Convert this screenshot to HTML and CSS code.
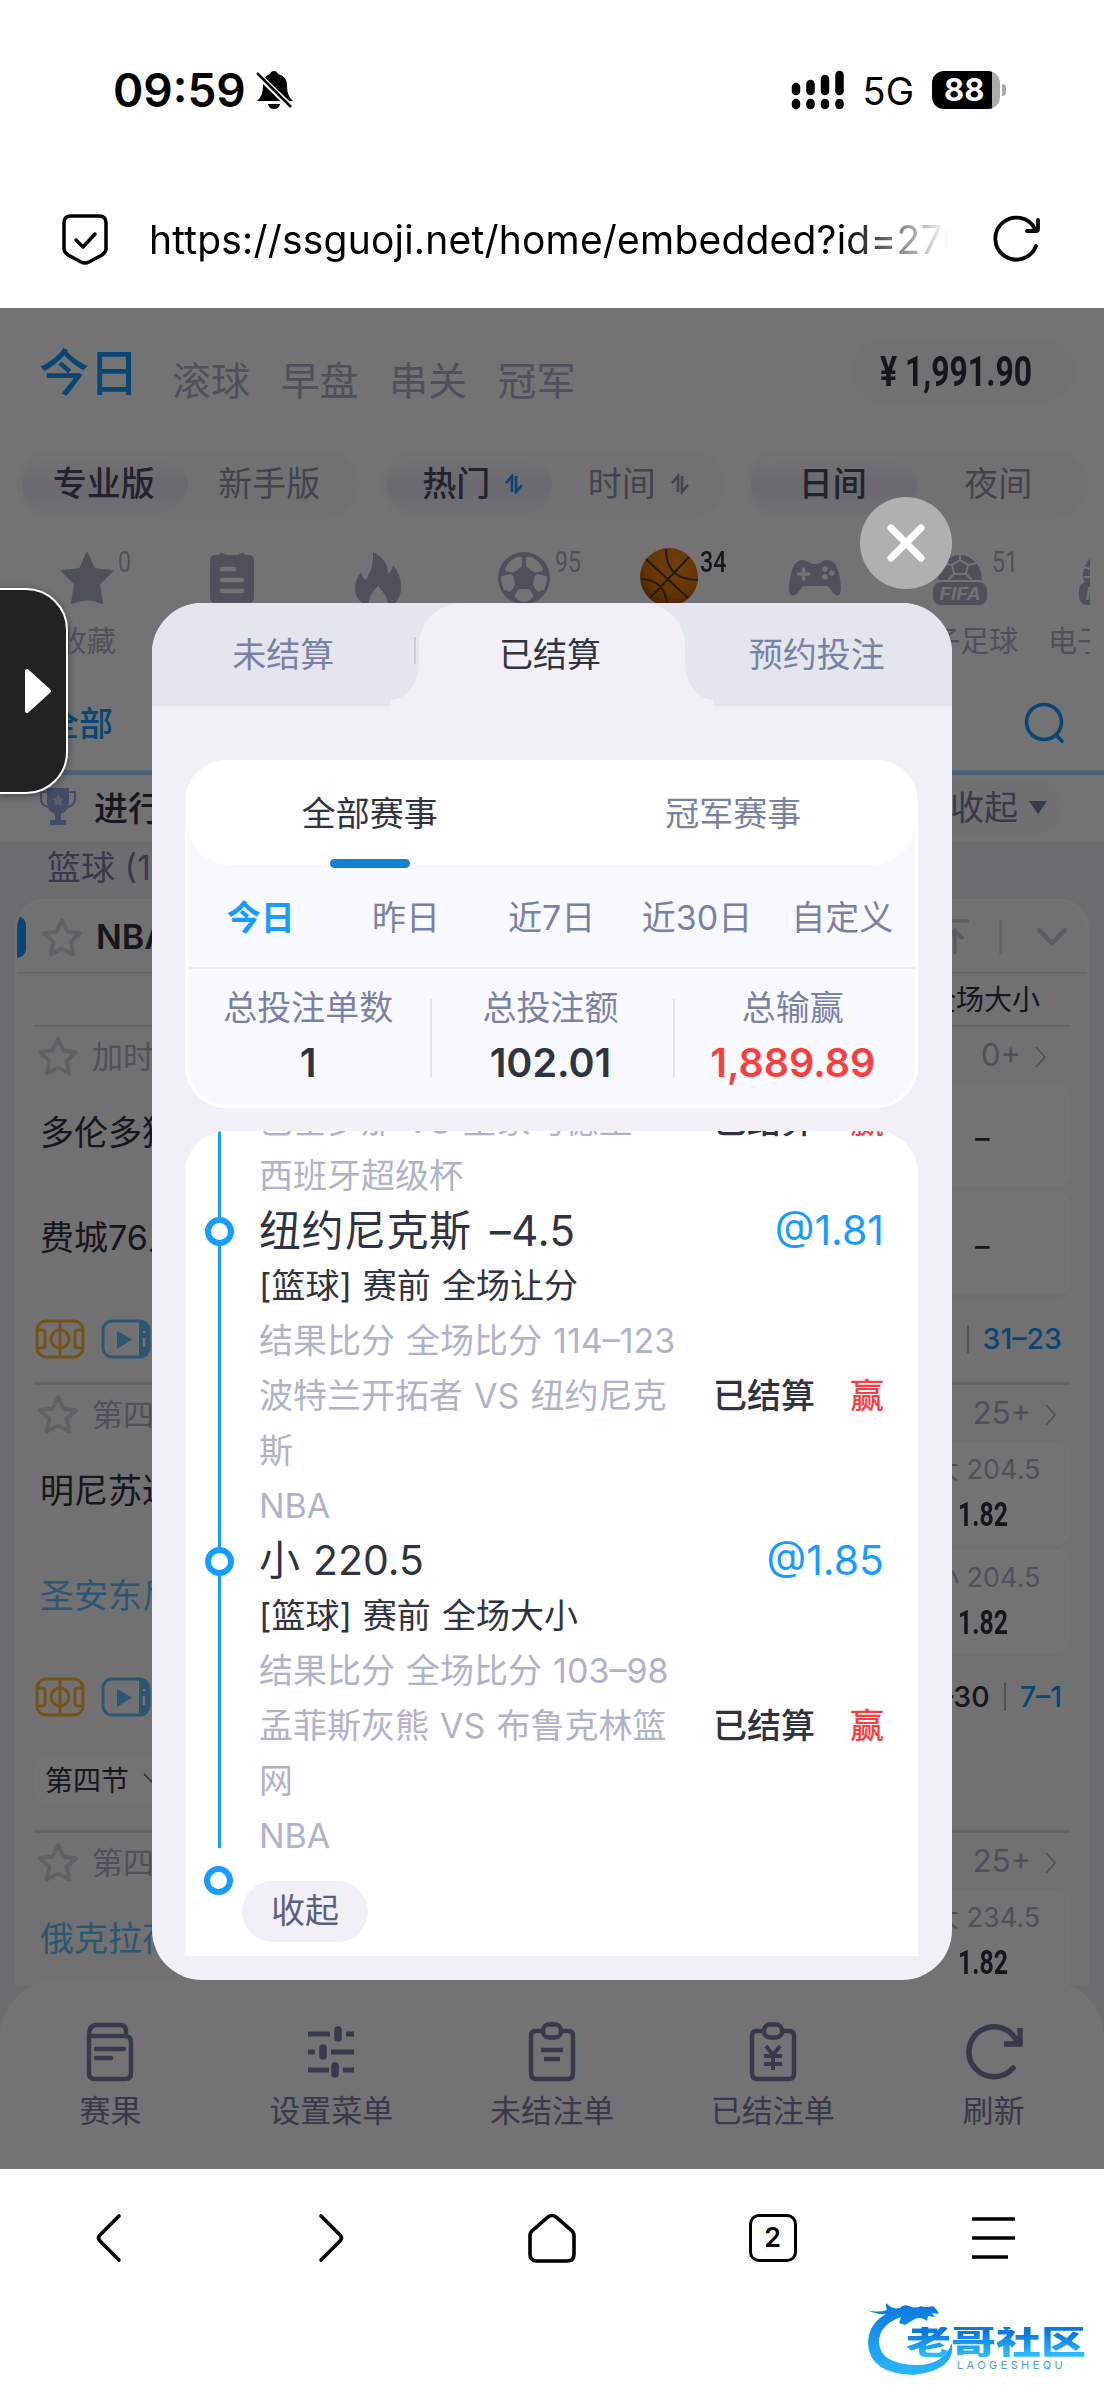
FILE: index.html
```html
<!DOCTYPE html>
<html lang="zh-CN">
<head>
    <meta charset="UTF-8">
    <meta name="viewport" content="width=device-width, initial-scale=1.0">
    <title>已结算注单</title>
    <link rel="stylesheet" href="styles.css">
</head>
<body>
    <!-- shared icons -->
    <svg class="defs" width="0" height="0">
        <symbol id="star" viewBox="0 0 44 42"><path d="M22 4l5.400 11.500 12.600 1.700-9.200 8.700 2.300 12.600L22 32.400l-11.100 6.100 2.300-12.600L4 17.200l12.600-1.700z" fill="none" stroke="currentColor" stroke-width="4" stroke-linejoin="round"/></symbol>
        <symbol id="court" viewBox="0 0 50 40"><g fill="none" stroke="currentColor" stroke-width="3"><rect x="2" y="2" width="46" height="36" rx="9"/><path d="M25 2v36M2 11h5q3 0 3 3v12q0 3-3 3H2M48 11h-5q-3 0-3 3v12q0 3 3 3h5"/><circle cx="25" cy="20" r="9"/></g></symbol>
        <symbol id="video" viewBox="0 0 50 40"><rect x="2" y="2" width="46" height="36" rx="9" fill="none" stroke="currentColor" stroke-width="3"/><path d="M38 2h4q6 0 6 7v22q0 7-6 7h-4zM16 12l15 8.500L16 30z" fill="currentColor"/><path d="M43 12v2M43 19v9" stroke="#fff" stroke-width="2.500"/></symbol>
        <symbol id="next" viewBox="0 0 14 24"><path d="M2 2l9 10-9 10" fill="none" stroke="currentColor" stroke-width="1.500"/></symbol>
        <symbol id="clip" viewBox="0 0 48 60"><g fill="none" stroke="currentColor" stroke-width="4.500"><path d="M15 9H8q-5 0-5 5v37q0 6 5 6h32q5 0 5-6V14q0-5-5-5h-7"/><rect x="15" y="2.500" width="18" height="13" rx="6"/></g></symbol>
        <symbol id="sort" viewBox="0 0 20 20"><path class="sort-up" d="M8 18V2L2 9" fill="none" stroke-width="2.600"/><path class="sort-down" d="M12 2v16l6-7" fill="none" stroke-width="2.600"/></symbol>
    </svg>

    <!-- status bar -->
    <header class="status">
        <div class="clock">09:59
            <svg width="37" height="40" viewBox="0 0 37 40"><path d="M18 1q3 0 4 3 9 2 9 12 0 10 6 15H1q6-5 6-15Q7 6 14 4q1-3 4-3z"/><path d="M12 34h12q-1 5-6 5t-6-5z"/><path d="M1 4l34 33" stroke="#fff" stroke-width="6"/><path d="M1 3l34 34" stroke="#000" stroke-width="2.500"/></svg>
        </div>
        <div class="signal">
            <svg width="54" height="40" viewBox="0 0 54 40" stroke="#000" stroke-width="8.500" stroke-linecap="round"><path d="M5 17v4M19.500 14v7M34 9v12M48.500 5v16M5 33v2M19.500 33v2M34 33v2M48.500 33v2"/></svg>
            <span class="net">5G</span>
            <span class="battery">88</span><i class="battery-tip"></i>
        </div>
    </header>
    <div class="address">
        <svg width="48" height="52" viewBox="0 0 48 52" fill="none" stroke="#000" stroke-width="3.500" stroke-linejoin="round" stroke-linecap="round"><path d="M10 3h28q7 0 7 7v26q0 3-4 6L28 49q-4 2-8 0L7 42q-4-3-4-6V10q0-7 7-7z"/><path d="M15 27l7 7 12-13"/></svg>
        <div class="url">https://ssguoji.net/home/embedded?id=270</div>
        <svg width="48" height="50" viewBox="0 0 48 50" fill="none" stroke="#000" stroke-width="3.800" stroke-linecap="round"><path d="M43 32A21 21 0 1 1 42 15"/><path d="M45 6v9q0 2-2 2h-9"/></svg>
    </div>

    <main class="app">
        <div class="top">
            <nav class="kinds">
                <b>今日</b><span>滚球</span><span>早盘</span><span>串关</span><span>冠军</span>
                <div class="balance"><span>¥ 1,991.90</span></div>
            </nav>
            <div class="switches">
                <div class="switch"><b>专业版</b><span>新手版</span></div>
                <div class="switch"><b>热门<svg class="sort on" width="20" height="20"><use href="#sort"/></svg></b><span>时间<svg class="sort" width="20" height="20"><use href="#sort"/></svg></span></div>
                <div class="switch"><b>日间</b><span>夜间</span></div>
            </div>
            <div class="sports">
                <div class="sport"><svg width="54" height="54" viewBox="0 0 54 54"><path d="M27 2l7 16 18 2-13 13 3 19q-15-7-30 0l3-19L2 20l18-2z" fill="currentColor" stroke="currentColor" stroke-width="2" stroke-linejoin="round"/></svg><sup>0</sup><span>收藏</span></div>
                <div class="sport"><svg width="54" height="54" viewBox="0 0 54 54"><path d="M10 4h4q0-2 3-2t3 2h14q0-2 3-2t3 2h4q5 0 5 6v36q0 6-6 6H11q-6 0-6-6V10q0-6 5-6z" fill="currentColor"/><path d="M17 18h12M17 29h20M17 40h20" stroke="#fff" stroke-width="4.500" stroke-linecap="round"/></svg></div>
                <div class="sport"><svg width="54" height="56" viewBox="0 0 54 56"><path d="M22 1q15 7 15 22 4-3 5-9 9 11 8 24-1 14-13 18 1-10-10-21-11 10-9 21Q5 51 4 38q0-9 6-17 1 6 5 8Q23 16 22 1z" fill="currentColor"/></svg></div>
                <div class="sport"><svg width="54" height="54" viewBox="0 0 54 54"><circle cx="27" cy="27" r="26" fill="currentColor"/><path d="M8 18q3-8 12-12 5-1 5 1v7q0 2-2 3l-6 4q-2 1-4 0l-4-1q-1 0-1-2zM46 18q-3-8-12-12-5-1-5 1v7q0 2 2 3l6 4q2 1 4 0l4-1q1 0 1-2zM4 27q0-2 2-2l7-2q2 0 3 2l2 8q0 2-1 3l-3 4q-1 1-3 0l-4-1q-3-6-3-12zM50 27q0-2-2-2l-7-2q-2 0-3 2l-2 8q0 2 1 3l3 4q1 1 3 0l4-1q3-6 3-12zM18 46q-1-1 0-2l2-4q1-2 3-2h8q2 0 3 2l2 4q1 1 0 2-4 5-9 5t-9-5z" fill="#fff"/></svg><sup>95</sup></div>
                <div class="sport hot"><svg width="60" height="60" viewBox="0 0 60 60"><defs><radialGradient id="ball" cx=".6" cy=".3" r=".8"><stop offset="0" stop-color="#f58a1c"/><stop offset=".6" stop-color="#e07806"/><stop offset="1" stop-color="#8c4008"/></radialGradient></defs><circle cx="30" cy="30" r="29" fill="url(#ball)"/><path d="M7 12l42 39M50 10L11 51M27 2Q27 33 59 33M2 32Q26 33 28 57" fill="none" stroke="#4d3c30" stroke-width="2"/></svg><sup>34</sup></div>
                <div class="sport"><svg width="54" height="54" viewBox="0 0 54 54"><path d="M10 10q6-3 12 2 5 2 10 0 6-5 12-2 8 6 9 28-1 10-7 5l-6-8H15l-6 8q-8 5-8-5Q2 16 10 10z" fill="currentColor"/><path d="M15.500 18v10M10.500 23h10" stroke="#fff" stroke-width="3.500" stroke-linecap="round"/><circle cx="37" cy="18" r="2.800" fill="#fff"/><circle cx="44" cy="22" r="2.800" fill="#fff"/><circle cx="37" cy="26" r="2.800" fill="#fff"/></svg></div>
                <div class="sport"><svg width="56" height="56" viewBox="0 0 56 56"><path d="M6 29a22 25 0 0 1 44 0z" fill="currentColor"/><path d="M20 14l8-5 8 5-2 9H22zM28 9V3M20 14l-9-2M36 14l9-2M22 23l-6 6M34 23l6 6" fill="none" stroke="#fff" stroke-width="2"/><rect x="1" y="31" width="54" height="23" rx="8" fill="currentColor"/><text x="28" y="49" text-anchor="middle" class="ball-tag">FIFA</text></svg><sup>51</sup><span>电子足球</span></div>
                <div class="sport"><svg width="56" height="56" viewBox="0 0 56 56"><circle cx="28" cy="24" r="23" fill="currentColor"/><path d="M6 16q12 5 44 0M6 26h44" stroke="#fff" stroke-width="2" fill="none"/><rect x="1" y="31" width="54" height="23" rx="8" fill="currentColor"/><text x="28" y="49" text-anchor="middle" class="ball-tag">NBA</text></svg><span>电子篮球</span></div>
            </div>
            <div class="leagues">
                <span>全部</span>
                <svg width="42" height="42" viewBox="0 0 42 42" fill="none" stroke="#179cff" stroke-width="3.600" stroke-linecap="round"><circle cx="20" cy="20" r="17.500"/><path d="M33 34l5 5"/></svg>
            </div>
        </div>
        <div class="live">
            <svg width="38" height="40" viewBox="0 0 38 40"><path d="M8 1h22v14q0 9-8 12v6h5v5H11v-5h5v-6q-8-3-8-12z" fill="#97a8dc"/><path d="M8 5H2v7q0 6 7 8M30 5h6v7q0 6-7 8" fill="none" stroke="#97a8dc" stroke-width="2"/><path d="M19 7l2 4 4 .5-3 3 .8 4.500-3.800-2-3.800 2 .8-4.500-3-3 4-.5z" fill="#c5d0ee"/></svg>
            <b>进行中 (10)</b>
            <div class="fold">收起<i></i></div>
        </div>
        <div class="sport-name">篮球 (10)</div>

        <section class="card">
            <div class="league">
                <i class="mark"></i>
                <svg class="star" width="44" height="42"><use href="#star"/></svg>
                <b>NBA</b>
                <svg class="to-top" width="34" height="36" viewBox="0 0 34 36"><path d="M1 2h32M19 35V12M11 20l8-9 8 9" fill="none" stroke="currentColor" stroke-width="3.500"/></svg>
                <i class="bar"></i>
                <svg class="down" width="30" height="20" viewBox="0 0 30 20"><path d="M2 3l13 13L28 3" fill="none" stroke="currentColor" stroke-width="4.500" stroke-linecap="round"/></svg>
            </div>
            <div class="columns">全场大小</div>
            <div class="match">
                <div class="match-head"><svg class="star" width="44" height="42"><use href="#star"/></svg><span>加时</span><em class="near">0+<svg width="14" height="24"><use href="#next"/></svg></em></div>
                <div class="match-body">
                    <div class="teams"><p>多伦多猛龙</p><p>费城76人</p></div>
                    <div class="odds"><div class="odd empty">–</div><div class="odd empty">–</div></div>
                </div>
                <div class="match-foot"><svg class="court" width="50" height="40"><use href="#court"/></svg><svg class="video" width="50" height="40"><use href="#video"/></svg><span class="score">26–26</span><i></i><span class="score total">31–23</span></div>
            </div>
            <div class="match">
                <div class="match-head"><svg class="star" width="44" height="42"><use href="#star"/></svg><span>第四节</span><em>25+<svg width="14" height="24"><use href="#next"/></svg></em></div>
                <div class="match-body">
                    <div class="teams"><p>明尼苏达森林狼</p><p class="lead">圣安东尼奥马刺</p></div>
                    <div class="odds"><div class="odd"><small>大 204.5</small><b>1.82</b></div><div class="odd"><small>小 204.5</small><b>1.82</b></div></div>
                </div>
                <div class="match-foot"><svg class="court" width="50" height="40"><use href="#court"/></svg><svg class="video" width="50" height="40"><use href="#video"/></svg><span class="score">22–30</span><i></i><span class="score total">7–1</span></div>
                <div class="period">第四节<svg width="22" height="14" viewBox="0 0 22 14"><path d="M1 2l10 10L21 2" fill="none" stroke="#5a6080" stroke-width="1.500"/></svg></div>
            </div>
            <div class="match">
                <div class="match-head"><svg class="star" width="44" height="42"><use href="#star"/></svg><span>第四节</span><em>25+<svg width="14" height="24"><use href="#next"/></svg></em></div>
                <div class="match-body">
                    <div class="teams"><p class="lead">俄克拉荷马雷霆</p></div>
                    <div class="odds"><div class="odd"><small>大 234.5</small><b>1.82</b></div></div>
                </div>
            </div>
        </section>

        <nav class="menu">
            <div><svg width="48" height="60" viewBox="0 0 48 60" fill="none" stroke="currentColor" stroke-width="4.500"><path d="M3 13v38q0 6 6 6h30q6 0 6-6V20q0-5-5-6H3q0-11 7-11h24q6 0 6 6v6"/><path d="M10 27h28M10 36h15" stroke-linecap="round"/></svg>赛果</div>
            <div><svg width="48" height="60" viewBox="0 0 48 60" fill="none" stroke="currentColor" stroke-width="5"><path d="M1 12h22M39 12h8M1 30h7M24 30h23M1 48h21M36 48h11"/><path d="M31 8v8M16 26v8M28 44v8" stroke-width="7.500" stroke-linecap="round"/></svg>设置菜单</div>
            <div><svg width="48" height="60" viewBox="0 0 48 60"><use href="#clip"/><path d="M13 28h22M16 37h16" stroke="currentColor" stroke-width="4.500"/></svg>未结注单</div>
            <div><svg width="48" height="60" viewBox="0 0 48 60"><use href="#clip"/><path d="M17 24l7 9 7-9M24 33v15M15 34h18M15 42h18" stroke="currentColor" stroke-width="3.800" fill="none"/></svg>已结注单</div>
            <div><svg width="58" height="60" viewBox="0 0 58 60" fill="none" stroke="currentColor" stroke-width="5.500"><path d="M48 46A25 25 0 1 1 52 20" stroke-linecap="round"/><path d="M55 6v16H39"/></svg>刷新</div>
        </nav>

        <div class="mask"></div>

        <div class="close"><svg width="38" height="38" viewBox="0 0 38 38"><path d="M4 4l30 30M34 4L4 34" stroke="#fff" stroke-width="7" stroke-linecap="round"/></svg></div>

        <div class="modal">
            <div class="tabs">
                <div class="tab">未结算</div>
                <div class="tab active">已结算</div>
                <div class="tab">预约投注</div>
            </div>
            <div class="summary">
                <div class="types"><span class="active">全部赛事</span><span>冠军赛事</span></div>
                <div class="days"><b>今日</b><span>昨日</span><span>近7日</span><span>近30日</span><span>自定义</span></div>
                <div class="stats">
                    <div><span>总投注单数</span><b>1</b></div>
                    <div><span>总投注额</span><b>102.01</b></div>
                    <div><span>总输赢</span><b class="win">1,889.89</b></div>
                </div>
            </div>
            <div class="bets">
                <div class="bet first">
                    <div class="row grey"><p>巴塞罗那 VS 皇家马德里</p><span class="state">已结算 <b>赢</b></span></div>
                    <p class="grey">西班牙超级杯</p>
                </div>
                <div class="bet">
                    <i class="dot"></i>
                    <div class="row title handicap"><span>纽约尼克斯 –4.5</span><span class="price">@1.81</span></div>
                    <p>[篮球] 赛前 全场让分</p>
                    <p class="grey">结果比分 全场比分 114–123</p>
                    <div class="row grey"><p>波特兰开拓者 VS 纽约尼克斯</p><span class="state">已结算 <b>赢</b></span></div>
                    <p class="grey">NBA</p>
                </div>
                <div class="bet last">
                    <i class="dot"></i>
                    <div class="row title"><span>小 220.5</span><span class="price">@1.85</span></div>
                    <p>[篮球] 赛前 全场大小</p>
                    <p class="grey">结果比分 全场比分 103–98</p>
                    <div class="row grey"><p>孟菲斯灰熊 VS 布鲁克林篮网</p><span class="state">已结算 <b>赢</b></span></div>
                    <p class="grey">NBA</p>
                </div>
                <div class="end"><i class="dot"></i><span>收起</span></div>
            </div>
        </div>

        <div class="handle"><svg width="28" height="48" viewBox="0 0 28 48"><path d="M3 4v40l22-20z" fill="#fff" stroke="#fff" stroke-width="4" stroke-linejoin="round"/></svg></div>
    </main>

    <!-- browser toolbar -->
    <footer class="toolbar">
        <div><svg width="48" height="52" viewBox="0 0 48 52"><path d="M33 4L14 23q-3 3 0 6l19 19"/></svg></div>
        <div><svg width="48" height="52" viewBox="0 0 48 52"><path d="M14 4l19 19q3 3 0 6L14 48"/></svg></div>
        <div><svg width="50" height="52" viewBox="0 0 50 52"><path d="M3 24q0-4 3-6L21 5q4-3 8 0l15 13q3 2 3 6v18q0 7-7 7H10q-7 0-7-7z"/></svg></div>
        <div><span class="pages">2</span></div>
        <div><svg width="48" height="52" viewBox="0 0 48 52" stroke-linecap="butt"><path d="M2 7h43M2 26h43M2 45h36"/></svg></div>
        <div class="brand">
            <svg width="96" height="80" viewBox="0 0 96 80">
                <defs><linearGradient id="blue" x1="0" y1="0" x2="0" y2="1"><stop offset="0" stop-color="#0878dc"/><stop offset="1" stop-color="#2ab8ff"/></linearGradient></defs>
                <path d="M1 13q10 3 20 0-2-4-1-7 6 7 14 5 3-4 9-2 6 3 12 0 4 2 12 0 4 3 6 8l-7-1 3 4-7-1-1 5q-6-5-12-2l-10 6-6-2 2-6Q13 28 13 45q1 22 37 23 28 0 36-22 4 27-38 32Q4 77 2 47q0-20 18-30-9 1-19-4z" fill="url(#blue)"/>
            </svg>
            <div class="brand-name"><b>老哥社区</b><small>LAOGESHEQU</small></div>
        </div>
    </footer>
</body>
</html>
```
FILE: styles.css
```css
* {
    box-sizing: border-box;
}
body {
    margin: 0;
    width: 1104px;
    height: 2400px;
    overflow: hidden;
    background: #fff;
    color: #303442;
    font-family: Inter, "Noto Sans CJK SC", sans-serif;
    font-size: 34px;
}
p {
    margin: 0;
}
svg {
    display: block;
    flex: none;
}
b {
    font-weight: 500;
}
em, i {
    font-style: normal;
}
.defs {
    position: absolute;
}

/* status bar */
.status {
    height: 172px;
    padding: 8px 98px 0 113px;
    display: flex;
    align-items: center;
    justify-content: space-between;
    color: #000;
}
.clock {
    display: flex;
    align-items: center;
    gap: 10px;
    font-size: 46px;
    font-weight: 600;
}
.signal {
    display: flex;
    align-items: center;
}
.net {
    margin: 2px 18px 0;
    font-size: 38px;
}
.battery {
    width: 68px;
    height: 38px;
    border-radius: 12px;
    background: linear-gradient(90deg, #000 60px, #aaa 60px);
    color: #fff;
    font-size: 31px;
    font-weight: 700;
    line-height: 38px;
    padding-left: 12px;
}
.battery-tip {
    width: 4px;
    height: 12px;
    margin-left: 2px;
    border-radius: 0 4px 4px 0;
    background: #aaa;
}
.address {
    height: 136px;
    padding: 2px 62px 4px 61px;
    display: flex;
    align-items: center;
    color: #000;
}
.url {
    width: 808px;
    margin: 0 36px 0 40px;
    overflow: hidden;
    white-space: nowrap;
    font-size: 39px;
    letter-spacing: .2px;
    -webkit-mask-image: linear-gradient(90deg, #000 86%, transparent 99%);
    mask-image: linear-gradient(90deg, #000 86%, transparent 99%);
}

/* sports page */
.app {
    position: relative;
    height: 1861px;
    overflow: hidden;
    background: #f2f2f7;
    display: flex;
    flex-direction: column;
}
.top {
    flex: none;
    height: 467px;
    background: #fff;
    border-bottom: 5px solid #a7d7fd;
}
.kinds {
    height: 142px;
    padding: 0 29px 19px 39px;
    display: flex;
    align-items: center;
    color: #afb3c8;
    font-size: 39px;
}
.kinds b {
    color: #179cff;
    font-size: 50px;
    margin: -2px 33px 0 0;
}
.kinds > span {
    margin: 17px 30.500px 0 0;
}
.balance {
    margin: 3px 0 0 auto;
    width: 223px;
    height: 64px;
    border-radius: 32px;
    background: #fbfbfb;
    color: #303442;
    display: flex;
    align-items: center;
    justify-content: center;
}
.balance span {
    margin: 0 15px 0 0;
    font-family: Roboto, sans-serif;
    font-size: 42px;
    font-weight: 700;
    white-space: nowrap;
    flex: none;
    transform: scaleX(.76);
}
.switches {
    height: 69px;
    padding: 0 16px;
    display: flex;
    justify-content: space-between;
}
.switch {
    width: 343px;
    padding: 6px;
    border-radius: 35px;
    background: #fafafa;
    display: flex;
    color: #9397ac;
}
.switch b, .switch span {
    flex: 1;
    padding: 0 2px 6px 0;
    display: flex;
    align-items: center;
    justify-content: center;
    gap: 14px;
    border-radius: 30px;
}
.switch b {
    color: #494e68;
    background: linear-gradient(#fff, #eaebf5 50%, #f7f9ff);
}
.sort {
    margin: 5px -10px 0 0;
    color: #9397ac;
}
.sort-up, .sort-down {
    stroke: currentColor;
}
.sort.on {
    color: #179cff;
}
.sort.on .sort-down {
    stroke: #303442;
}
.sports {
    width: 1076px;
    height: 147px;
    margin: 0 14px;
    padding: 32px 0 3px;
    overflow: hidden;
    display: flex;
    color: #afb3c8;
}
.sport {
    position: relative;
    flex: 0 0 145.6px;
    display: flex;
    flex-direction: column;
    align-items: center;
    justify-content: space-between;
    font-size: 29px;
    line-height: 42px;
    white-space: nowrap;
}
.sport sup {
    position: absolute;
    left: 104px;
    top: -6px;
    font-family: Roboto, sans-serif;
    font-size: 29px;
    line-height: 34px;
    transform: scaleX(.8);
    transform-origin: left;
}
.hot sup {
    top: -2px;
    color: #303442;
    font-weight: 500;
}
.hot {
    margin-top: -4px;
}
.ball-tag {
    font: italic 700 19px "Liberation Sans", sans-serif;
    fill: #fff;
}
.leagues {
    height: 104px;
    padding: 6px 38px 0 45px;
    display: flex;
    align-items: center;
    justify-content: space-between;
    color: #179cff;
    font-weight: 500;
}
.leagues svg {
    margin-top: 4px;
}
.live {
    flex: none;
    height: 66px;
    padding: 0 41px 3px 39px;
    background: #fdfdfd;
    display: flex;
    align-items: center;
}
.live b {
    margin-left: 17px;
}
.fold {
    margin-left: auto;
    height: 56px;
    padding: 0 16px 2px 30px;
    border-radius: 28px;
    background: #f8f8f8;
    display: flex;
    align-items: center;
    gap: 11px;
    color: #7981a4;
}
.fold i {
    margin-top: 4px;
    border: 9px solid transparent;
    border-top: 13px solid #7981a4;
    border-bottom: 0;
}
.sport-name {
    flex: none;
    height: 58px;
    padding-left: 47px;
    line-height: 53px;
    color: #7981a4;
}
.card {
    flex: 1;
    min-height: 0;
    overflow: hidden;
    margin: 0 15px -4px;
    border: 2px solid #fff;
    border-bottom: 0;
    border-radius: 30px 30px 0 0;
    background: #fafafa;
}
.league {
    height: 73px;
    padding-right: 20px;
    border-bottom: 2px solid #e4e4ef;
    display: flex;
    align-items: center;
    color: #ccced9;
}
.league b {
    margin-left: 12px;
    color: #303442;
    font-weight: 600;
}
.star {
    color: #d5d7e0;
}
.mark {
    width: 9px;
    height: 42px;
    margin-right: 14px;
    border-radius: 0 9px 9px 0;
    background: #179cff;
}
.to-top {
    margin-left: auto;
}
.bar {
    width: 3px;
    height: 34px;
    margin: 0 35px 0 29px;
    background: #dfe0ea;
}
.columns {
    height: 53px;
    margin: 0 17px;
    padding-right: 30px;
    border-bottom: 2px solid #e0e0ea;
    text-align: right;
    font-size: 28px;
    line-height: 53px;
}
.match {
    margin: 0 17px;
}
.match + .match {
    border-top: 3px solid #e0e0ea;
}
.match-head {
    height: 57px;
    padding-left: 2px;
    display: flex;
    align-items: center;
    font-size: 31px;
    color: #afb3c8;
}
.match-head span {
    margin: -2px 0 0 12px;
}
.match-head em {
    margin: -2px 22px 0 auto;
    display: flex;
    align-items: center;
    gap: 13px;
}
.match-head em svg {
    margin: 4px -10px 0 0;
}
.match-head .near {
    margin-right: 32px;
}
.match-body {
    display: flex;
    justify-content: space-between;
}
.teams {
    padding-left: 6px;
    line-height: 105px;
    margin: -4px 0 -2px;
}
.lead {
    color: #65bfff;
}
.odds {
    width: 190px;
    display: flex;
    flex-direction: column;
    gap: 5px;
}
.odd {
    height: 103px;
    padding: 8px 0 0 70px;
    border-radius: 14px;
    background: #fff;
    display: flex;
    flex-direction: column;
    line-height: 44px;
    box-shadow: 0 2px 5px #f0f3f3;
}
.odd small {
    font-size: 27px;
    line-height: 40px;
    color: #afb3c8;
    white-space: nowrap;
    margin-left: -18px;
}
.odd b {
    font-family: Roboto, sans-serif;
    font-weight: 700;
    font-size: 34px;
    transform: scaleX(.73);
    transform-origin: left;
    margin: 2px 0 0 8px;
}
.odd.empty {
    padding: 32px 0 0 95px;
    font-size: 29px;
    font-weight: 500;
}
.match-foot {
    height: 87px;
    padding: 0 8px 0 1px;
    display: flex;
    align-items: center;
    font-size: 28.500px;
    font-weight: 500;
}
.court {
    color: #ffb73c;
}
.video {
    margin: 0 auto 0 16px;
    color: #65bfff;
}
.match-foot i {
    width: 2px;
    height: 28px;
    margin: 0 14px;
    background: #afb3c8;
}
.total {
    color: #179cff;
}
.period {
    width: 170px;
    height: 51px;
    margin: 15px 0 24px;
    padding: 0 11px 3px;
    border-radius: 12px;
    background: #fff;
    display: flex;
    align-items: center;
    gap: 14px;
    font-size: 28px;
}
.menu {
    position: relative;
    flex: none;
    height: 188px;
    padding-top: 41px;
    border-radius: 56px 56px 0 0;
    background: #fff;
    display: flex;
    font-size: 31px;
    line-height: 46px;
    color: #7981a4;
}
.menu div {
    flex: 1;
    display: flex;
    flex-direction: column;
    align-items: center;
    gap: 6px;
}
.mask {
    position: absolute;
    inset: 0;
    background: rgba(0, 0, 0, .55);
}

/* settled bets window */
.close {
    position: absolute;
    left: 860px;
    top: 189px;
    width: 92px;
    height: 92px;
    border-radius: 50%;
    background: #b0b0b0;
    display: flex;
    align-items: center;
    justify-content: center;
}
.modal {
    position: absolute;
    left: 152px;
    top: 295px;
    width: 800px;
    height: 1377px;
    overflow: hidden;
    border-radius: 50px;
    background: #f1f0f6;
    padding-bottom: 24px;
    display: flex;
    flex-direction: column;
}
.tabs {
    flex: none;
    height: 103px;
    background: #e3e6ed;
    display: flex;
    line-height: 103px;
    text-align: center;
    color: #7981a4;
}
.tab {
    flex: 1;
    padding-right: 4px;
}
.tab.active {
    position: relative;
    border-radius: 42px 42px 0 0;
    background: #f1f0f6;
    color: #303442;
}
/* curved feet of the active tab */
.tab.active::before, .tab.active::after {
    content: "";
    position: absolute;
    bottom: 0;
    width: 28px;
    height: 42px;
    background: radial-gradient(ellipse 28px 36px at 0 0, #e3e6ed 98%, #f1f0f6);
}
.tab.active::before {
    left: -28px;
}
.tab.active::after {
    right: -28px;
    background: radial-gradient(ellipse 28px 36px at 100% 0, #e3e6ed 98%, #f1f0f6);
}
.tab:first-child {
    background: linear-gradient(#c9cddd, #c9cddd) no-repeat 262px 34px / 2px 34px;
}
.summary {
    flex: none;
    height: 348px;
    margin: 54px 34px 23px 33px;
    border: 3px solid #fff;
    border-radius: 42px;
    background: #f8f9fc;
    overflow: hidden;
    color: #7981a4;
}
.types {
    height: 102px;
    border-radius: 0 0 42px 42px;
    background: #fff;
    display: flex;
    line-height: 101px;
    text-align: center;
}
.types span {
    flex: 1;
}
.types .active {
    position: relative;
    color: #303442;
}
.types .active::after {
    content: "";
    position: absolute;
    left: 50%;
    bottom: -3px;
    width: 80px;
    height: 9px;
    margin-left: -40px;
    border-radius: 5px;
    background: #157fd4;
}
.days {
    height: 104px;
    border-bottom: 2px solid #ebecf1;
    display: flex;
    line-height: 105px;
    text-align: center;
}
.days > * {
    flex: 1;
}
.days b {
    color: #179cff;
    font-weight: 700;
}
.stats {
    display: flex;
    padding-top: 12px;
}
.stats div {
    flex: 1;
    padding-right: 2px;
    display: flex;
    flex-direction: column;
    align-items: center;
    line-height: 54px;
}
.stats div + div {
    background: linear-gradient(#e2e3ec, #e2e3ec) no-repeat 0 18px / 2px 78px;
}
.stats b {
    margin-top: 1px;
    font-size: 39.500px;
    font-weight: 600;
    color: #303442;
}
.stats .win {
    color: #f83f3f;
}
.bets {
    flex: 1;
    min-height: 0;
    margin: 0 34px 0 33px;
    border-radius: 42px 42px 0 0;
    background: #fff;
    overflow: hidden;
    line-height: 55px;
    word-spacing: 1.500px;
}
.bet {
    position: relative;
    margin-left: 33px;
    border-left: 3px solid #179cff;
    padding: 0 34px 0 38px;
    height: 330px;
}
.bet.first {
    height: 110px;
    margin-top: -38px;
}
.bet.last {
    height: 315px;
}
.grey {
    color: #afb3c8;
}
.row {
    display: flex;
    justify-content: space-between;
}
.row p {
    width: 415px;
}
.title {
    font-size: 41px;
}
.handicap span:first-child {
    font-size: 42px;
    letter-spacing: .5px;
    word-spacing: 6px;
}
.price {
    color: #179cff;
}
.state {
    color: #303442;
    font-weight: 500;
    word-spacing: 26px;
    white-space: nowrap;
}
.state b {
    color: #f83f3f;
}
.dot {
    position: absolute;
    left: -16px;
    top: 14px;
    width: 29px;
    height: 29px;
    border: 6px solid #179cff;
    border-radius: 50%;
    background: #fff;
}
.end {
    position: relative;
    padding: 33px 0 0 57px;
}
.end .dot {
    left: 19px;
    top: 18px;
}
.end span {
    display: block;
    width: 126px;
    height: 61px;
    border-radius: 31px;
    background: #f1f0f6;
    color: #5a6080;
    line-height: 59px;
    text-align: center;
}
.handle {
    position: absolute;
    left: -3px;
    top: 280px;
    width: 71px;
    height: 206px;
    padding-left: 25px;
    border: 2px solid #fff;
    border-radius: 0 42px 42px 0;
    background: #222;
    box-shadow: 0 2px 8px rgba(0, 0, 0, .4);
    display: flex;
    align-items: center;
}

/* browser toolbar */
.toolbar {
    position: relative;
    height: 231px;
    padding-top: 43px;
    display: flex;
    fill: none;
    stroke: #000;
    stroke-width: 3.600px;
    stroke-linecap: round;
}
.toolbar > div {
    flex: 1;
    display: flex;
    justify-content: center;
    align-items: flex-start;
}
.pages {
    width: 48px;
    height: 48px;
    margin-top: 2px;
    border: 3.500px solid #000;
    border-radius: 10px;
    color: #000;
    font-size: 27px;
    font-weight: 600;
    line-height: 42px;
    text-align: center;
}
.toolbar .brand {
    position: absolute;
    left: 866px;
    top: 128px;
    width: 230px;
    height: 84px;
    display: block;
    stroke: none;
}
.brand-name {
    position: absolute;
    left: 40px;
    top: 25px;
}
.brand-name b {
    display: block;
    font-size: 45px;
    font-weight: 900;
    line-height: 40px;
    white-space: nowrap;
    transform: scaleY(.75);
    background: linear-gradient(#0a78dc 20%, #2ab8ff 90%);
    -webkit-background-clip: text;
    background-clip: text;
    color: transparent;
}
.brand-name small {
    display: block;
    margin: -3px 0 0 51px;
    font-size: 11px;
    line-height: 12px;
    letter-spacing: 3.400px;
    color: #4a9be0;
}
```
